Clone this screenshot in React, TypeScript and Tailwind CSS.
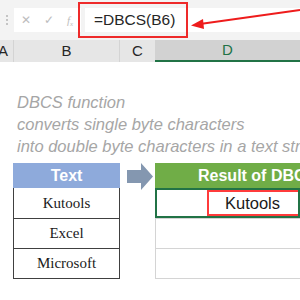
import { useState } from 'react'

const rows = ['Kutools', 'Excel', 'Microsoft']

export default function App() {
  const [active] = useState(0)

  return (
    <div className="relative w-[300px] h-[300px] overflow-hidden bg-white font-['Liberation_Sans',sans-serif]">
      {/* formula bar */}
      <div className="h-[40px] bg-[#f3f3f3] flex items-start pt-[8px]">
        <div className="w-[14px] shrink-0 h-[24px] flex flex-col items-center justify-center gap-[2px]">
          <span className="w-[2px] h-[2px] bg-[#c4c4c4]" />
          <span className="w-[2px] h-[2px] bg-[#c4c4c4]" />
          <span className="w-[2px] h-[2px] bg-[#c4c4c4]" />
        </div>
        <div className="w-[67px] shrink-0 h-[24px] bg-white flex items-center text-[#bdbdbd]">
          <span className="w-[24px] text-center text-[12px]">✕</span>
          <span className="w-[22px] text-center text-[12px]">✓</span>
          <span className="w-[20px] text-center text-[11px] italic font-['Liberation_Serif',serif]">
            f<sub className="text-[7px]">x</sub>
          </span>
        </div>
        <div className="ml-[4px] flex-1 min-w-0 h-[24px] bg-white flex items-center pl-[9px] text-[15.5px] text-[#262626]">
          =DBCS(B6)
        </div>
      </div>

      {/* column headers */}
      <div className="h-[22px] flex bg-[#e6e6e6] text-[15px] text-[#262626]">
        <div className="w-[14px] shrink-0 border-r border-[#d4d4d4] flex items-center overflow-hidden">
          <span className="-ml-[2px]">A</span>
        </div>
        <div className="w-[106px] shrink-0 border-r border-[#d4d4d4] flex items-center justify-center">B</div>
        <div className="w-[35px] shrink-0 flex items-center justify-center">C</div>
        <div className="flex-1 min-w-0 bg-[#d2d2d2] border-b-2 border-[#217346] flex items-center justify-center text-[#217346]">
          D
        </div>
      </div>

      {/* description */}
      <div className="pt-[29px] pl-[17px] italic text-[16.5px] leading-[22px] text-[#a6a6a6] whitespace-nowrap">
        <div>DBCS function</div>
        <div>converts single byte characters</div>
        <div>into double byte characters in a text string</div>
      </div>

      {/* tables */}
      <div className="mt-[6px] flex">
        <div className="ml-[13px] w-[107px] shrink-0">
          <div className="h-[25px] bg-[#8eaadb] flex items-center justify-center text-white font-bold text-[16px]">
            Text
          </div>
          <div className="border-l border-r border-b border-[#404040]">
            {rows.map((r, i) => (
              <div
                key={r}
                className={`h-[30px] flex items-center justify-center font-['Liberation_Serif',serif] text-[15px] text-[#1a1a1a] ${i > 0 ? 'border-t border-[#404040]' : ''}`}
              >
                {r}
              </div>
            ))}
          </div>
        </div>

        <div className="w-[35px] shrink-0 flex justify-center">
          <svg width="26" height="27" viewBox="0 0 26 27" className="ml-[4px]">
            <polygon points="0,7 14,7 14,0 26,13.5 14,27 14,20 0,20" fill="#8497b0" />
          </svg>
        </div>

        <div className="flex-1 min-w-0">
          <div className="h-[25px] bg-[#70ad47] flex items-center pl-[43px] text-white font-bold text-[16px] whitespace-nowrap overflow-hidden">
            Result of DBCS
          </div>
          <div className="border-l border-b border-[#d4d4d4]">
            {rows.map((r, i) => (
              <div
                key={r}
                className={`h-[30px] ${i > 0 ? 'border-t border-[#d4d4d4]' : ''} ${i === active ? 'border-2 border-[#217346] -ml-px' : ''}`}
              >
                {i === active && (
                  <div className="ml-[50px] h-full border-2 border-r-0 border-[#ff3b3b] flex items-center pl-[16px] text-[16.5px] text-[#1a1a1a]">
                    Kutools
                  </div>
                )}
              </div>
            ))}
          </div>
        </div>
      </div>

      {/* red highlight + pointer arrow */}
      <div className="absolute left-[78px] top-[2px] w-[110px] h-[36px] border-2 border-[#ee2a2a]" />
      <svg className="absolute left-0 top-0" width="300" height="40">
        <line x1="300" y1="10" x2="200" y2="24" stroke="#ee1c1c" strokeWidth="2" />
        <polygon points="191,25.5 203,19 204,29" fill="#ee1c1c" />
      </svg>
    </div>
  )
}
